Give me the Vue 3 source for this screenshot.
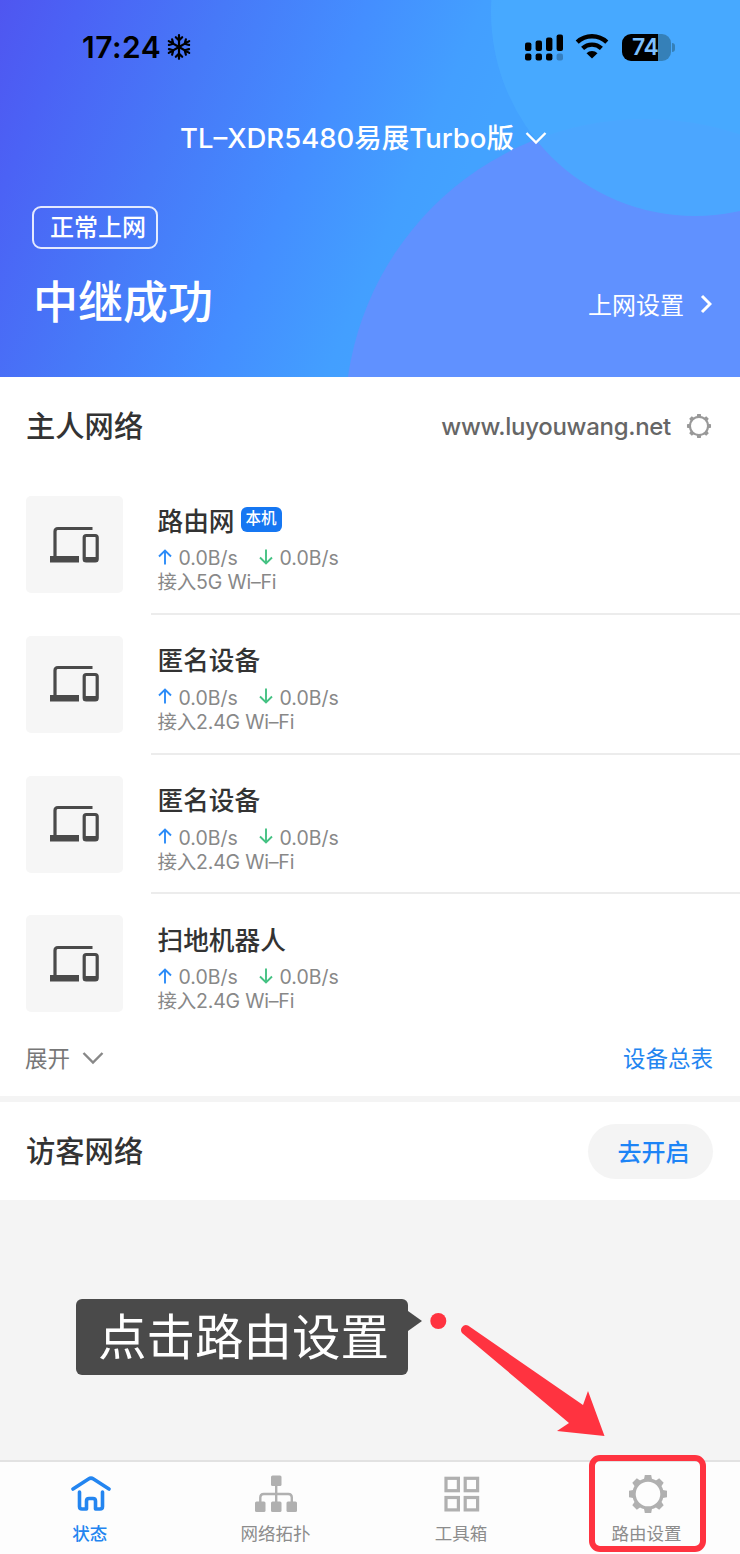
<template>
  <div class="app">
    <header class="hero">
      <svg class="hero-circles" viewBox="0 0 740 377">
        <circle cx="645" cy="419" r="300" fill="#6091ff" />
        <circle cx="695" cy="12" r="204" fill="#48aaff" fill-opacity="0.86" />
      </svg>

      <div class="status-bar">
        <span class="time">17:24</span>
        <svg class="snow" viewBox="0 0 24 26">
          <g v-for="a in [0, 60, 120, 180, 240, 300]" :key="a" :transform="`rotate(${a} 12 13)`">
            <path d="M12 13V1.2M8.8 3.2L12 6.400l3.200-3.200" />
          </g>
        </svg>
        <svg class="signal" viewBox="0 0 38 27">
          <rect x="0" y="8.5" width="6.4" height="8.5" rx="2" />
          <rect x="10.6" y="6.5" width="6.4" height="10.5" rx="2" />
          <rect x="21" y="3.5" width="6.4" height="13.5" rx="2" />
          <rect x="31.6" y="0.5" width="6.4" height="16.5" rx="2" />
          <rect x="0" y="19.5" width="6.4" height="7" rx="2" />
          <rect x="10.6" y="19.5" width="6.4" height="7" rx="2" />
          <rect x="21" y="19.5" width="6.4" height="7" rx="2" />
          <rect x="31.6" y="19.5" width="6.4" height="7" rx="2" opacity="0.25" />
        </svg>
        <svg class="wifi" viewBox="0 0 34 26">
          <path class="wave" d="M2.2 9.2a21.5 21.5 0 0 1 29.6 0" />
          <path class="wave" d="M7.6 15.300a13.8 13.8 0 0 1 18.8 0" />
          <path d="M17 25.500l-5.500-5.300a8 8 0 0 1 11 0z" />
        </svg>
        <div class="battery"><span>74</span></div>
        <i class="battery-tip"></i>
      </div>

      <div class="router-name">
        <span>TL–XDR5480易展Turbo版</span>
        <svg width="22" height="14" viewBox="0 0 22 14"><path d="M1.5 2l9.5 9.5L20.500 2" /></svg>
      </div>

      <div class="net-badge">正常上网</div>
      <div class="hero-row">
        <h1>中继成功</h1>
        <div class="net-link">
          <span>上网设置</span>
          <svg width="12" height="20" viewBox="0 0 12 20"><path d="M2 2l8 8-8 8" /></svg>
        </div>
      </div>
    </header>

    <section class="host">
      <div class="section-head">
        <h2>主人网络</h2>
        <div class="ssid">
          <span>www.luyouwang.net</span>
          <svg width="26" height="26" viewBox="0 0 40 40" class="gear small">
            <circle cx="20" cy="20" r="14" />
            <path v-for="a in gearTeeth" :key="a" d="M16.500 6l.7-4.500h5.600l.7 4.500z" :transform="`rotate(${a} 20 20)`" />
          </svg>
        </div>
      </div>

      <div class="device" v-for="(d, i) in devices" :key="i">
        <div class="device-icon">
          <svg width="50" height="38" viewBox="0 0 50 38">
            <path d="M5 30V5.500q0-3 3-3H42.500" fill="none" stroke="#4a4a4a" stroke-width="3.200" />
            <path d="M0 30H29V36.500H0z" />
            <rect x="34.200" y="9.500" width="13" height="25.500" rx="2" fill="none" stroke="#4a4a4a" stroke-width="3.200" />
            <path d="M33.500 31h14V35.500H33.500z" />
          </svg>
        </div>
        <div class="device-info">
          <div class="device-name">
            <span>{{ d.name }}</span>
            <em v-if="d.self">本机</em>
          </div>
          <div class="rates">
            <svg class="up" width="14" height="16" viewBox="0 0 14 16"><path d="M7 15.500V1.500M1 7.500l6-6 6 6" /></svg>
            <span>0.0B/s</span>
            <svg class="down" width="14" height="16" viewBox="0 0 14 16"><path d="M7 0.500v14M1 8.500l6 6 6-6" /></svg>
            <span>0.0B/s</span>
          </div>
          <div class="access">接入{{ d.band }} Wi–Fi</div>
        </div>
      </div>

      <div class="list-foot">
        <span>展开</span>
        <svg width="22" height="14" viewBox="0 0 22 14"><path d="M1.500 2l9.500 9.500L20.500 2" /></svg>
        <a>设备总表</a>
      </div>
    </section>

    <section class="guest">
      <h2>访客网络</h2>
      <button>去开启</button>
    </section>

    <nav class="tabs">
      <div class="tab active">
        <svg width="40" height="40" viewBox="0 0 40 40">
          <path d="M2 15L17.500 5q2.500-1.600 5 0L38 15" />
          <path d="M8.500 18V32.500q0 2.500 2.500 2.500h4.500V27q0-2.500 2.500-2.500h4q2.500 0 2.500 2.500v8h4.500q2.500 0 2.500-2.500V18" />
        </svg>
        <span>状态</span>
      </div>
      <div class="tab">
        <svg width="44" height="40" viewBox="0 0 44 40" class="solid">
          <rect x="17" y="1.500" width="10.500" height="10.500" rx="1.500" />
          <rect x="1" y="27.500" width="10.500" height="10.500" rx="1.500" />
          <rect x="17" y="27.500" width="10.500" height="10.500" rx="1.500" />
          <rect x="32.500" y="27.500" width="10.500" height="10.500" rx="1.500" />
          <path d="M22.200 11v18M6.300 28v-4.500q0-3.500 3.500-3.500h24.500q3.500 0 3.500 3.500V28" />
        </svg>
        <span>网络拓扑</span>
      </div>
      <div class="tab">
        <svg width="40" height="40" viewBox="0 0 40 40">
          <rect x="4" y="4.300" width="12.400" height="12.400" />
          <rect x="23.200" y="4.300" width="12.400" height="12.400" />
          <rect x="4" y="23.500" width="12.400" height="12.400" />
          <rect x="23.200" y="23.500" width="12.400" height="12.400" />
        </svg>
        <span>工具箱</span>
      </div>
      <div class="tab">
        <svg width="40" height="40" viewBox="0 0 40 40" class="gear">
          <circle cx="20" cy="20" r="14" />
          <path v-for="a in gearTeeth" :key="a" d="M15.800 6.500l1-5.500h6.400l1 5.500z" :transform="`rotate(${a} 20 20)`" />
        </svg>
        <span>路由设置</span>
      </div>
    </nav>

    <!-- guide overlay -->
    <div class="tip">点击路由设置</div>
    <svg class="pointer" viewBox="0 0 200 130">
      <circle cx="18.300" cy="21" r="8" />
      <path d="M48 25.500L163 105L168 91L184.500 136L137 131L149 123L42 33A5 5 0 0 1 48 25.500z" />
    </svg>
    <div class="highlight"></div>
  </div>
</template>

<script setup>
const gearTeeth = [0, 45, 90, 135, 180, 225, 270, 315]

const devices = [
  { name: '路由网', band: '5G', self: true },
  { name: '匿名设备', band: '2.4G' },
  { name: '匿名设备', band: '2.4G' },
  { name: '扫地机器人', band: '2.4G' }
]
</script>

<style>
body {
  margin: 0;
  background: #f4f4f4;
}
</style>

<style scoped>
.app {
  position: relative;
  display: flex;
  flex-direction: column;
  width: 740px;
  height: 1554px;
  overflow: hidden;
  background: #f4f4f4;
  font-family: Inter, "Noto Sans CJK SC", sans-serif;
  color: #333;
}

h1,
h2 {
  margin: 0;
  font-weight: 500;
}

.hero {
  position: relative;
  box-sizing: border-box;
  height: 377px;
  flex-shrink: 0;
  color: #fff;
  background: linear-gradient(113deg, #4f56f0 0%, #4b62f5 9%, #4779f8 25%, #448eff 41%, #439fff 54%, #43a2ff 60%);
}

.hero-circles {
  position: absolute;
  inset: 0;
  width: 740px;
  height: 377px;
}

.status-bar {
  position: relative;
  display: flex;
  align-items: center;
  height: 94px;
  padding-left: 82px;
  color: #000;
}

.time {
  width: 85px;
  font-size: 30px;
  font-weight: 600;
  letter-spacing: 0.5px;
  white-space: nowrap;
}

.snow {
  width: 24px;
  height: 26px;
  margin-right: 334px;
  fill: none;
  stroke: #000;
  stroke-width: 2.2;
  stroke-linecap: round;
}

.signal {
  width: 38px;
  height: 27px;
}

.wifi {
  width: 34px;
  height: 26px;
  margin: 0 13px 2px 12px;
}

.wave {
  fill: none;
  stroke: #000;
  stroke-width: 4.4;
}

.battery {
  width: 49px;
  height: 27px;
  border-radius: 9px;
  background: linear-gradient(90deg, #000 36px, #3580b8 36px);
  color: #7cc0ff;
  font-size: 23px;
  font-weight: 600;
  line-height: 27px;
  letter-spacing: -0.5px;
  text-indent: 10px;
}

.battery-tip {
  width: 3px;
  height: 9px;
  margin-left: 1px;
  border-radius: 0 4px 4px 0;
  background: #3580b8;
}

.router-name {
  position: relative;
  display: flex;
  align-items: center;
  gap: 11px;
  height: 40px;
  margin-top: 24px;
  padding-left: 180px;
  font-size: 27.500px;
  font-weight: 500;
  line-height: 40px;
  white-space: nowrap;
}

.router-name svg,
.net-link svg,
.list-foot svg {
  fill: none;
  stroke: currentColor;
  stroke-width: 2.4;
}

.net-badge {
  position: relative;
  box-sizing: border-box;
  width: 126px;
  height: 43px;
  margin: 48px 0 0 32px;
  padding-left: 16px;
  border: 2px solid rgba(255, 255, 255, 0.85);
  border-radius: 9px;
  font-size: 24px;
  font-weight: 500;
  line-height: 40px;
}

.hero-row {
  position: relative;
  display: flex;
  align-items: center;
  justify-content: space-between;
  height: 100px;
  padding: 0 28px 0 33px;
}

.hero-row h1 {
  font-size: 45px;
}

.net-link {
  display: flex;
  align-items: center;
  gap: 16px;
  margin-top: 9px;
  font-size: 24px;
}

.net-link svg {
  stroke-width: 3;
}

.host {
  height: 719px;
  flex-shrink: 0;
  background: #fff;
}

.section-head {
  display: flex;
  align-items: center;
  justify-content: space-between;
  height: 97px;
  padding: 0 28px 0 26px;
}

h2 {
  font-size: 29.300px;
  padding-bottom: 4px;
}

.ssid {
  display: flex;
  align-items: center;
  gap: 15px;
  padding-top: 1px;
  color: #666;
  font-size: 24px;
  font-weight: 500;
  letter-spacing: -0.3px;
}

.gear circle {
  fill: none;
  stroke: #b0b0b0;
  stroke-width: 3.4;
}

.gear path {
  fill: #b0b0b0;
  stroke: none;
}

.gear.small circle {
  stroke: #999;
}

.gear.small path {
  fill: #999;
}

.device {
  display: flex;
  height: 139.800px;
  padding-left: 26px;
}

.device-icon {
  display: flex;
  align-items: center;
  justify-content: center;
  width: 97px;
  height: 97px;
  margin-top: 22px;
  border-radius: 5px;
  background: #f6f6f6;
}

.device-icon svg {
  fill: #4a4a4a;
}

.device-info {
  position: relative;
  top: 1px;
  flex: 1;
  box-sizing: border-box;
  margin-left: 28px;
  padding: 26px 0 0 6.500px;
  border-bottom: 2px solid #ececec;
}

.device:nth-last-child(2) .device-info {
  border-bottom: none;
}

.device-name {
  display: flex;
  align-items: center;
  gap: 6px;
  height: 36px;
  font-size: 25.700px;
  font-weight: 500;
}

.device-name em {
  width: 41px;
  height: 25px;
  margin-top: 1px;
  border-radius: 6px;
  background: #1677f2;
  color: #fff;
  font-size: 15.500px;
  font-style: normal;
  line-height: 23px;
  text-align: center;
}

.rates {
  display: flex;
  align-items: center;
  height: 26px;
  margin-top: 8px;
  color: #888;
  font-size: 19.500px;
}

.rates svg {
  margin: -3px 7px 0 0;
  fill: none;
  stroke-width: 1.9;
}

.rates span {
  width: 80px;
}

.rates .up {
  stroke: #2c8cf8;
}

.rates .down {
  stroke: #45c283;
}

.access {
  height: 24px;
  color: #888;
  font-size: 19.500px;
  line-height: 22px;
  letter-spacing: -0.2px;
}

.list-foot {
  display: flex;
  align-items: center;
  height: 50px;
  padding: 0 27px 0 25px;
  color: #777;
  font-size: 22.500px;
}

.list-foot span,
.list-foot a {
  padding-bottom: 3px;
}

.list-foot svg {
  margin-left: 12px;
  color: #888;
}

.list-foot a {
  margin-left: auto;
  color: #2385f0;
}

.guest {
  display: flex;
  align-items: center;
  justify-content: space-between;
  height: 98px;
  flex-shrink: 0;
  margin-top: 6px;
  padding: 0 27px 0 26px;
  background: #fff;
}

.guest button {
  width: 125px;
  height: 55px;
  padding: 0 0 2px 6px;
  border: none;
  border-radius: 28px;
  background: #f4f4f4;
  color: #1d84f6;
  font: 500 24px Inter, "Noto Sans CJK SC", sans-serif;
}

.tabs {
  display: grid;
  grid-template-columns: repeat(4, 185.600px);
  box-sizing: border-box;
  height: 94px;
  margin-top: auto;
  margin-left: -2px;
  border-top: 2px solid #e2e2e2;
  background: #fdfdfd;
}

.tab {
  display: flex;
  flex-direction: column;
  align-items: center;
  padding-top: 12px;
  color: #8c8c8c;
  font-size: 17.500px;
  line-height: 24px;
}

.tab svg {
  margin-bottom: 8px;
  fill: none;
  stroke: #b0b0b0;
  stroke-width: 3.2;
}

.tab span {
  margin-left: -2px;
}

.tab .solid rect {
  fill: #b0b0b0;
  stroke: none;
}

.tab .solid path {
  stroke-width: 2.4;
}

.tab.active {
  color: #2385f0;
  font-weight: 500;
}

.tab.active svg {
  stroke: #2385f0;
  stroke-width: 3.6;
  stroke-linecap: round;
  stroke-linejoin: round;
}

.tip {
  position: absolute;
  left: 76px;
  top: 1299px;
  width: 332px;
  height: 76px;
  border-radius: 6px;
  background: #4a4a4a;
  color: #fff;
  font-size: 48.500px;
  font-weight: 400;
  line-height: 77px;
  text-indent: 22px;
  white-space: nowrap;
}

.tip::after {
  content: "";
  position: absolute;
  left: 100%;
  top: 12px;
  border: 10px solid transparent;
  border-left: 14px solid #4a4a4a;
  border-right: none;
}

.pointer {
  position: absolute;
  left: 420px;
  top: 1300px;
  width: 200px;
  height: 130px;
  overflow: visible;
  fill: #ff3340;
}

.highlight {
  position: absolute;
  box-sizing: border-box;
  left: 589px;
  top: 1455px;
  width: 117px;
  height: 97px;
  border: 6px solid #ff3340;
  border-radius: 11px;
}
</style>
